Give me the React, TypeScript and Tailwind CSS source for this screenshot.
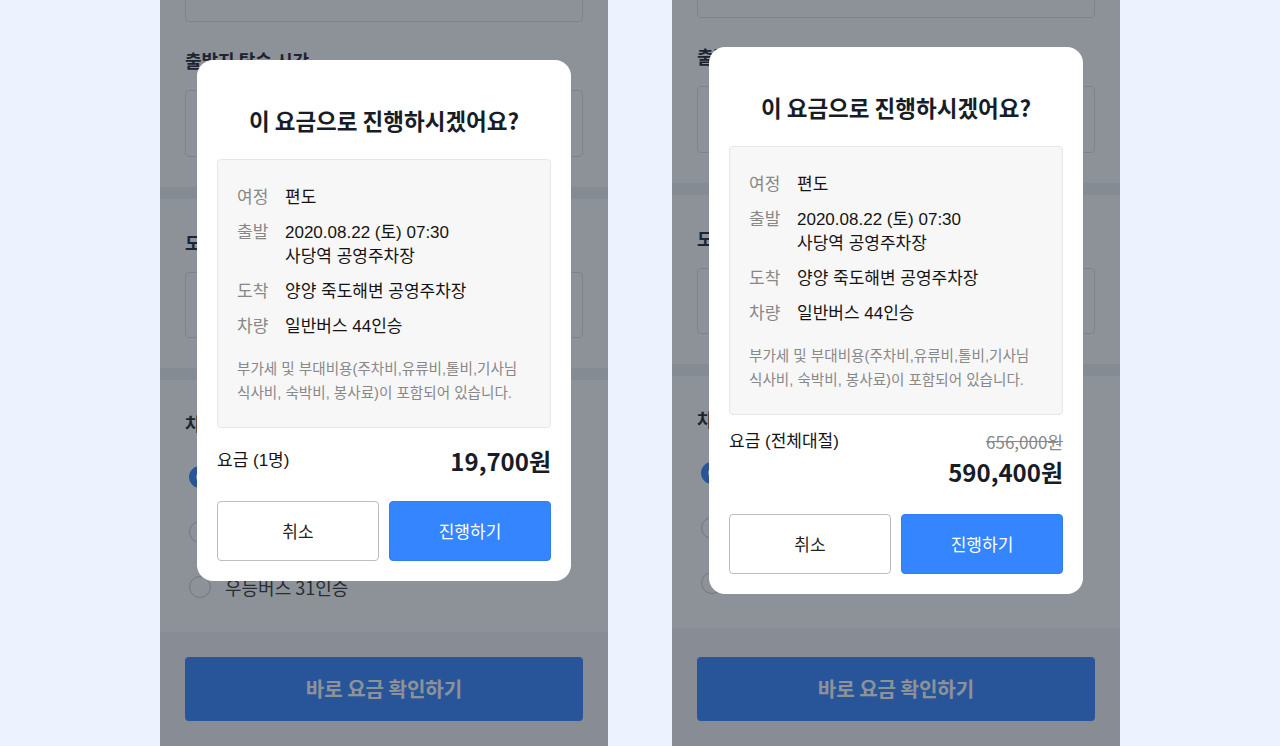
import React from 'react';

const SANS = "font-['Liberation_Sans','Noto_Sans_CJK_KR',sans-serif]";
const KR = "font-['Noto_Sans_CJK_KR','Noto_Sans',sans-serif]";

type Trip = {
  label: string;
  value: string[];
};

const TRIP_ROWS: Trip[] = [
  { label: '여정', value: ['편도'] },
  { label: '출발', value: ['2020.08.22 (토) 07:30', '사당역 공영주차장'] },
  { label: '도착', value: ['양양 죽도해변 공영주차장'] },
  { label: '차량', value: ['일반버스 44인승'] },
];

const BUSES = ['일반버스 44인승', '일반버스 28인승', '우등버스 31인승'];

function Field({ className = '' }: { className?: string }) {
  return <div className={`rounded-[4px] border border-[#dfe1e5] bg-white ${className}`} />;
}

// the booking form that sits behind the dimmed layer
function BookingForm({ shifted }: { shifted?: boolean }) {
  return (
    <div className={`flex flex-col bg-white ${KR}`}>
      <div className="px-[25px] pb-[30px]">
        <Field className={`h-[67px] ${shifted ? '-mt-[49px]' : '-mt-[45px]'}`} />
        <p className="mt-[25px] text-[18px] font-bold leading-[26px] text-[#1c2130]">출발지 탑승 시간</p>
        <Field className="mt-[17px] h-[67px]" />
      </div>
      <div className="h-[12px] bg-[#eff0f3]" />
      <div className="px-[25px] pt-[30px] pb-[30px]">
        <p className="text-[18px] font-bold leading-[26px] text-[#1c2130]">도착지 하차 시간</p>
        <Field className="mt-[17px] h-[66px]" />
      </div>
      <div className="h-[12px] bg-[#eff0f3]" />
      <div className="px-[25px] pt-[30px] pb-[30px]">
        <p className="text-[18px] font-bold leading-[26px] text-[#1c2130]">차량 선택</p>
        <div className="mt-[26px] flex flex-col gap-[25px]">
          {BUSES.map((bus, i) => (
            <div key={bus} className="flex h-[30px] items-center gap-[14px] pl-[4px]">
              {i === 0 ? (
                <span className="flex h-[22px] w-[22px] items-center justify-center rounded-full bg-[#3485ff]">
                  <span className="h-[8px] w-[8px] rounded-full bg-white" />
                </span>
              ) : (
                <span className="h-[22px] w-[22px] rounded-full border border-[#c4c7cc] bg-white" />
              )}
              <span className="text-[18px] leading-[26px] text-[#333]">{bus}</span>
            </div>
          ))}
        </div>
      </div>
      <div className={`bg-[#f4f5f7] px-[25px] pb-[40px] ${shifted ? 'pt-[29px]' : 'pt-[25px]'}`}>
        <button className="flex h-[64px] w-full items-center justify-center rounded-[4px] bg-[#3485ff] text-[20px] font-bold text-white">
          바로 요금 확인하기
        </button>
      </div>
    </div>
  );
}

function FareModal({ charter }: { charter?: boolean }) {
  return (
    <div className="rounded-[16px] bg-white px-[20px] pt-[44px] pb-[20px]">
      <h2 className={`text-center text-[22.5px] font-bold leading-[32px] text-[#181c26] ${KR}`}>
        이 요금으로 진행하시겠어요?
      </h2>

      {/* trip summary */}
      <div className={`mt-[23px] rounded-[4px] border border-[#e6e6e6] bg-[#f7f7f7] px-[19px] pt-[26px] pb-[22px] ${SANS}`}>
        <div className="flex flex-col gap-[11px]">
          {TRIP_ROWS.map((row) => (
            <div key={row.label} className="flex text-[17px] leading-[24px]">
              <span className="w-[48px] shrink-0 text-[#888]">{row.label}</span>
              <div className="flex flex-col text-[#141414]">
                {row.value.map((v) => (
                  <span key={v}>{v}</span>
                ))}
              </div>
            </div>
          ))}
        </div>
        <p className="mt-[18px] text-[14.6px] leading-[24px] text-[#888]">
          부가세 및 부대비용(주차비,유류비,톨비,기사님
          <br />
          식사비, 숙박비, 봉사료)이 포함되어 있습니다.
        </p>
      </div>

      {/* fare */}
      {charter ? (
        <div className="mt-[15px] flex items-start justify-between">
          <span className={`text-[17px] leading-[24px] text-[#141414] ${SANS}`}>요금 (전체대절)</span>
          <div className={`flex flex-col items-end ${KR}`}>
            <span className="text-[17px] leading-[24px] text-[#888] line-through">656,000원</span>
            <span className="text-[24px] font-bold leading-[36px] text-[#181c26]">590,400원</span>
          </div>
        </div>
      ) : (
        <div className="mt-[15px] flex h-[36px] items-center justify-between">
          <span className={`text-[17px] text-[#141414] ${SANS}`}>요금 (1명)</span>
          <span className={`text-[24px] font-bold text-[#181c26] ${KR}`}>19,700원</span>
        </div>
      )}

      <div className={`grid grid-cols-2 gap-[10px] ${charter ? 'mt-[24px]' : 'mt-[22px]'} ${KR}`}>
        <button className="h-[60px] rounded-[4px] border border-[#bdbdbd] bg-white text-[17px] text-[#222]">
          취소
        </button>
        <button className="h-[60px] rounded-[4px] border border-[#2f7ef5] bg-[#3485ff] text-[17px] text-white">
          진행하기
        </button>
      </div>
    </div>
  );
}

function PhonePanel({ charter }: { charter?: boolean }) {
  return (
    <div className="relative h-[746px] w-[448px] overflow-hidden">
      <BookingForm shifted={charter} />
      <div className="absolute inset-0 bg-[#1c2533]/50" />
      <div className={`absolute left-[37px] w-[374px] ${charter ? 'top-[47px]' : 'top-[60px]'}`}>
        <FareModal charter={charter} />
      </div>
    </div>
  );
}

export default function App() {
  return (
    <div className="flex h-[746px] w-full justify-center gap-[64px] overflow-hidden bg-[#edf3fe]">
      <PhonePanel />
      <PhonePanel charter />
    </div>
  );
}
